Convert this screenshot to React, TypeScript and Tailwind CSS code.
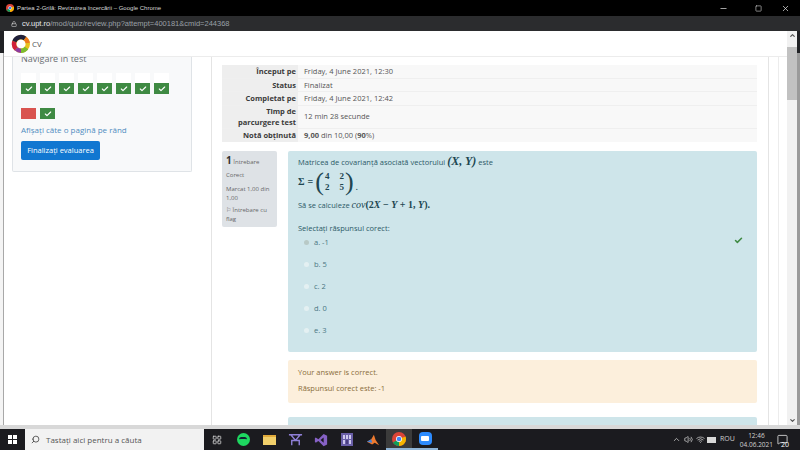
import { Check, ChevronDown, ChevronUp, LayoutGrid, Lock, Minus, Search, Square, Volume2, Wifi, X, MessageSquare } from 'lucide-react';

const flags = [0, 1, 2, 3, 4, 5, 6, 7];
const answers = ['a. -1', 'b. 5', 'c. 2', 'd. 0', 'e. 3'];

const summary = [
  { label: 'Început pe', value: 'Friday, 4 June 2021, 12:30' },
  { label: 'Status', value: 'Finalizat' },
  { label: 'Completat pe', value: 'Friday, 4 June 2021, 12:42' },
];

function Flag({ red }: { red?: boolean }) {
  return (
    <div className={`flex h-[11px] w-[15px] items-center justify-center ${red ? 'bg-[#d9534f]' : 'bg-[#3f8a43]'}`}>
      {red ? null : <Check size={8} strokeWidth={3.5} className="text-white" />}
    </div>
  );
}

function Logo() {
  return (
    <svg width="20" height="20" viewBox="0 0 20 20">
      <circle cx="10" cy="10" r="6.8" fill="none" stroke="#e8c21e" strokeWidth="4.4" />
      <path d="M3.4 7.5A6.8 6.8 0 0 0 5.2 14.8" fill="none" stroke="#d0213a" strokeWidth="4.4" />
      <path d="M5.2 14.8A6.8 6.8 0 0 0 10 16.8" fill="none" stroke="#8e3aa0" strokeWidth="4.4" />
      <path d="M10 16.8A6.8 6.8 0 0 0 15.5 14" fill="none" stroke="#7dbb2e" strokeWidth="4.4" />
      <path d="M3.4 7.5A6.8 6.8 0 0 1 14 4.5" fill="none" stroke="#20203a" strokeWidth="4.4" />
      <path d="M14 4.5A6.8 6.8 0 0 1 16.8 9" fill="none" stroke="#ee7a1f" strokeWidth="4.4" />
    </svg>
  );
}

function ChromeDot({ size }: { size: number }) {
  return (
    <svg width={size} height={size} viewBox="0 0 16 16">
      <circle cx="8" cy="8" r="8" fill="#db4437" />
      <path d="M8 8 1.1 12A8 8 0 0 0 8 16Z" fill="#0f9d58" />
      <path d="M8 8 8 16A8 8 0 0 0 15.5 5.2Z" fill="#f4b400" />
      <circle cx="8" cy="8" r="3.4" fill="#fff" />
      <circle cx="8" cy="8" r="2.6" fill="#4285f4" />
    </svg>
  );
}

function TaskIcons() {
  return (
    <div className="flex h-full items-center">
      <div className="flex h-full w-[26px] items-center justify-center">
        <LayoutGrid size={10} className="text-[#d0d0d0]" />
      </div>
      <div className="flex h-full w-[26px] items-center justify-center">
        <div className="flex h-[13px] w-[13px] items-center justify-center rounded-full bg-[#1ed760]">
          <div className="h-[5px] w-[8px] rounded-full border-t-2 border-[#123]" />
        </div>
      </div>
      <div className="flex h-full w-[26px] items-center justify-center">
        <div className="h-[10px] w-[13px] border-t-2 border-[#e0a93a] bg-[#f1cf6a]" />
      </div>
      <div className="flex h-full w-[26px] items-center justify-center">
        <svg width="15" height="15" viewBox="0 0 16 16">
          <path d="M1 3h14M3 3l5 6 5-6M4 14V9h8v5" fill="none" stroke="#8f7fd6" strokeWidth="1.5" />
        </svg>
      </div>
      <div className="flex h-full w-[26px] items-center justify-center">
        <svg width="14" height="14" viewBox="0 0 16 16">
          <path d="M11 1 5 7 2 5 1 6v4l1 1 3-2 6 6 4-2V3Z" fill="#8661c5" />
          <path d="M11 5 7.5 8l3.5 3Z" fill="#18181c" />
        </svg>
      </div>
      <div className="flex h-full w-[26px] items-center justify-center">
        <div className="grid h-[13px] w-[12px] grid-cols-3 gap-px bg-[#6a5fa8] p-[2px]">
          <div className="bg-[#cfc9ee]" />
          <div className="bg-[#cfc9ee]" />
          <div className="bg-[#cfc9ee]" />
          <div className="bg-[#cfc9ee]" />
          <div className="bg-[#4a4080]" />
          <div className="bg-[#cfc9ee]" />
        </div>
      </div>
      <div className="flex h-full w-[26px] items-center justify-center">
        <svg width="14" height="14" viewBox="0 0 16 16">
          <path d="M1 10 6 7l3-5 2 6 4 6-5-3-3 2Z" fill="#ee7a2f" />
          <path d="M6 7 1 10l6 1Z" fill="#3d7fd9" />
        </svg>
      </div>
      <div className="flex h-full w-[26px] items-center justify-center border-b-2 border-[#8fb4d6] bg-[#3b3b3b]">
        <ChromeDot size={14} />
      </div>
      <div className="flex h-full w-[26px] items-center justify-center border-b-2 border-[#8fb4d6]">
        <div className="flex h-[13px] w-[13px] items-center justify-center rounded-[4px] bg-[#2d8cff]">
          <div className="h-[5px] w-[8px] rounded-[1px] bg-white" />
        </div>
      </div>
    </div>
  );
}

export default function App() {
  return (
    <div className="flex h-[450px] w-[800px] flex-col overflow-hidden bg-[#202124] font-['Open_Sans',sans-serif]">
      <div className="flex h-[16px] shrink-0 items-center justify-between bg-black pl-[6px] text-[#d8d8d8]">
        <div className="flex items-center gap-[3px]">
          <ChromeDot size={8} />
          <span className="font-['Liberation_Sans',sans-serif] text-[6px] leading-none">Partea 2-Grilă: Revizuirea încercării – Google Chrome</span>
        </div>
        <div className="flex items-center">
          <div className="flex w-[45px] justify-center"><Minus size={9} /></div>
          <div className="flex w-[24px] justify-center"><Square size={7} /></div>
          <div className="flex w-[30px] justify-center"><X size={9} /></div>
        </div>
      </div>
      <div className="flex h-[15px] shrink-0 items-center gap-[5px] bg-[#2b2c2e] pl-[11px] font-['Liberation_Sans',sans-serif] text-[7.5px] leading-none">
        <Lock size={6} className="text-[#e8e8e8]" />
        <span className="text-[#9aa0a6]"><span className="text-[#e8eaed]">cv.upt.ro</span>/mod/quiz/review.php?attempt=400181&cmid=244368</span>
      </div>
      <div className="flex min-h-0 flex-1">
        <div className="flex w-[4px] shrink-0 flex-col bg-[#f4f4f4]">
          <div className="h-[22px] bg-[#202124]" />
          <div className="ml-auto w-px flex-1 bg-[#a8a8a8]" />
        </div>
        <div className="flex w-[783px] shrink-0 flex-col bg-white">
          <div className="flex h-[26px] shrink-0 items-center gap-[1px] border-b border-[#ececec] pl-[7px]">
            <Logo />
            <span className="text-[8px] text-[#555]">CV</span>
          </div>
          <div className="flex min-h-0 flex-1 overflow-hidden">
            <div className="w-[207px] shrink-0 pl-[8px]">
              <div className="h-[115px] w-[180px] overflow-hidden rounded-b-[2px] border border-t-0 border-[#dfe3e7] bg-[#f8f9fa] pl-[8px]">
                <p className="-mt-[5px] text-[9px] leading-[13px] text-[#6b6f73]">Navigare în test</p>
                <div className="mt-[8px] flex gap-[4px]">
                  {flags.map((flag) => <div key={flag} className="h-[10px] w-[15px] bg-white" />)}
                </div>
                <div className="flex gap-[4px]">
                  {flags.map((flag) => <Flag key={flag} />)}
                </div>
                <div className="mt-[14px] flex gap-[4px]">
                  <Flag red />
                  <Flag />
                </div>
                <p className="mt-[5px] text-[8px] leading-[11px] text-[#4f8cc0]">Afișați câte o pagină pe rând</p>
                <button type="button" className="mt-[4px] h-[19px] w-[79px] rounded-[2px] bg-[#1177d1] text-[7.5px] text-white">
                  Finalizați evaluarea
                </button>
              </div>
            </div>
            <div className="flex w-[558px] shrink-0 flex-col border-x border-[#e4e4e4] pl-[10px] pt-[8px]">
              <div className="mb-[9px] w-[535px] bg-[#f8f8f8] text-[7.5px] leading-[12.5px] text-[#555]">
                {summary.map((row) => (
                  <div key={row.label} className="flex border-b border-[#efefef]">
                    <div className="w-[76px] bg-[#eeeeee] pr-[2px] text-right font-bold text-[#3a3a3a]">{row.label}</div>
                    <div className="pl-[6px]">{row.value}</div>
                  </div>
                ))}
                <div className="flex items-center border-b border-[#efefef]">
                  <div className="w-[76px] bg-[#eeeeee] pr-[2px] text-right font-bold leading-[11px] text-[#3a3a3a]">Timp de<br />parcurgere test</div>
                  <div className="pl-[6px]">12 min 28 secunde</div>
                </div>
                <div className="flex h-[13.5px]">
                  <div className="w-[76px] bg-[#eeeeee] pr-[2px] text-right font-bold text-[#3a3a3a]">Notă obținută</div>
                  <div className="pl-[6px]"><b>9,00</b> din 10,00 (<b>90</b>%)</div>
                </div>
              </div>
              <div className="flex gap-[11px]">
                <div className="h-[76px] w-[55px] shrink-0 rounded-[2px] bg-[#dee2e6] pl-[4px] pt-[4px] text-[6px] leading-[9px] text-[#666]">
                  <p className="leading-[10px]"><b className="text-[10px] text-[#333]">1</b> Întrebare</p>
                  <p className="mt-[4px]">Corect</p>
                  <p className="mt-[5px]">Marcat 1,00 din<br />1,00</p>
                  <p className="mt-[3px]">⚐ Întrebare cu<br />flag</p>
                </div>
                <div className="w-[469px] shrink-0">
                  <div className="h-[201px] rounded-[2px] bg-[#cee5ea] pl-[10px] pt-[4px] text-[7.5px] leading-[12px] text-[#2c5a67]">
                    <p className="h-[12px]">
                      Matricea de covarianță asociată vectorului{' '}
                      <span className="font-['Liberation_Serif',serif] text-[12px] font-bold italic text-[#204651]">(X, Y)</span> este
                    </p>
                    <div className="flex h-[30px] items-center font-['Liberation_Serif',serif] text-[10px] text-[#204651]">
                      <span className="font-bold">Σ</span>
                      <span className="ml-[3px] font-bold">=</span>
                      <span className="ml-[2px] text-[26px] font-light leading-none">(</span>
                      <span className="mx-[1px] grid grid-cols-2 gap-x-[10px] text-[9px] font-bold leading-[11px]">
                        <span>4</span><span>2</span><span>2</span><span>5</span>
                      </span>
                      <span className="text-[26px] font-light leading-none">)</span>
                      <span className="ml-[2px] self-end pb-[4px]">.</span>
                    </div>
                    <p className="mt-[2px]">
                      Să se calculeze{' '}
                      <span className="font-['Liberation_Serif',serif] text-[10px] font-bold text-[#204651]"><i className="font-normal">cov</i>(2<i>X</i> − <i>Y</i> + 1, <i>Y</i>).</span>
                    </p>
                    <p className="mt-[11px]">Selectați răspunsul corect:</p>
                    <div className="relative -mt-[3px]">
                      {answers.map((answer, index) => (
                        <div key={answer} className="flex h-[22px] items-center gap-[5px] pl-[6px] text-[#4a7582]">
                          <div className={`h-[5px] w-[5px] rounded-full ${index === 0 ? 'bg-[#b8c9c6]' : 'bg-[#e4f0f2]'}`} />
                          <span>{answer}</span>
                        </div>
                      ))}
                      <Check size={9} strokeWidth={4} className="absolute right-[14px] top-[5px] text-[#3f8a43]" />
                    </div>
                  </div>
                  <div className="mt-[8px] h-[43px] rounded-[2px] bg-[#fcefdc] pl-[10px] pt-[4px] text-[7.5px] leading-[16px] text-[#8a6d3b]">
                    <p>Your answer is correct.</p>
                    <p>Răspunsul corect este: -1</p>
                  </div>
                  <div className="mt-[14px] h-[20px] rounded-[2px] bg-[#cee5ea]" />
                </div>
              </div>
            </div>
            <div className="w-[10px] shrink-0 border-r border-[#ececec]" />
            <div className="w-[8px] shrink-0" />
          </div>
        </div>
        <div className="flex w-[10px] shrink-0 flex-col items-center bg-[#f1f1f1]">
          <ChevronUp size={7} strokeWidth={4} className="mt-[1px] text-[#555]" />
          <div className="mt-[8px] h-[53px] w-full bg-[#c1c1c1]" />
          <ChevronDown size={7} strokeWidth={4} className="mb-[1px] mt-auto text-[#555]" />
        </div>
        <div className="flex w-[3px] shrink-0 flex-col bg-[#9a9a9a]">
          <div className="h-[22px] bg-[#202124]" />
        </div>
      </div>
      <div className="h-[4px] shrink-0 bg-[#d8d8d8]" />
      <div className="flex h-[21px] shrink-0 items-center bg-[#1b1b1f]">
        <div className="flex h-full w-[25px] items-center justify-center">
          <div className="grid h-[9px] w-[9px] grid-cols-2 gap-px">
            <div className="bg-white" /><div className="bg-white" /><div className="bg-white" /><div className="bg-white" />
          </div>
        </div>
        <div className="flex h-full w-[179px] items-center gap-[6px] bg-[#f2f2f2] pl-[6px] text-[8px] text-[#555]">
          <Search size={9} className="-scale-x-100 text-[#333]" />
          <span>Tastați aici pentru a căuta</span>
        </div>
        <TaskIcons />
        <div className="ml-auto flex h-full items-center pr-[11px] text-[#d0d0d0]">
          <ChevronUp size={9} className="mr-[3px]" />
          <Volume2 size={9} className="mr-[3px]" />
          <Wifi size={9} className="mr-[2px]" />
          <div className="mr-[4px] h-[6px] w-[9px] bg-[#d8d8d8]" />
          <span className="mr-[5px] text-[7px]">ROU</span>
          <div className="mr-[4px] flex flex-col items-center text-[6.5px] leading-[9px]">
            <span>12:46</span>
            <span>04.06.2021</span>
          </div>
          <div className="relative w-[12px]">
            <MessageSquare size={11} />
            <span className="absolute -bottom-[3px] right-0 text-[7px] leading-none text-white">20</span>
          </div>
        </div>
      </div>
    </div>
  );
}
